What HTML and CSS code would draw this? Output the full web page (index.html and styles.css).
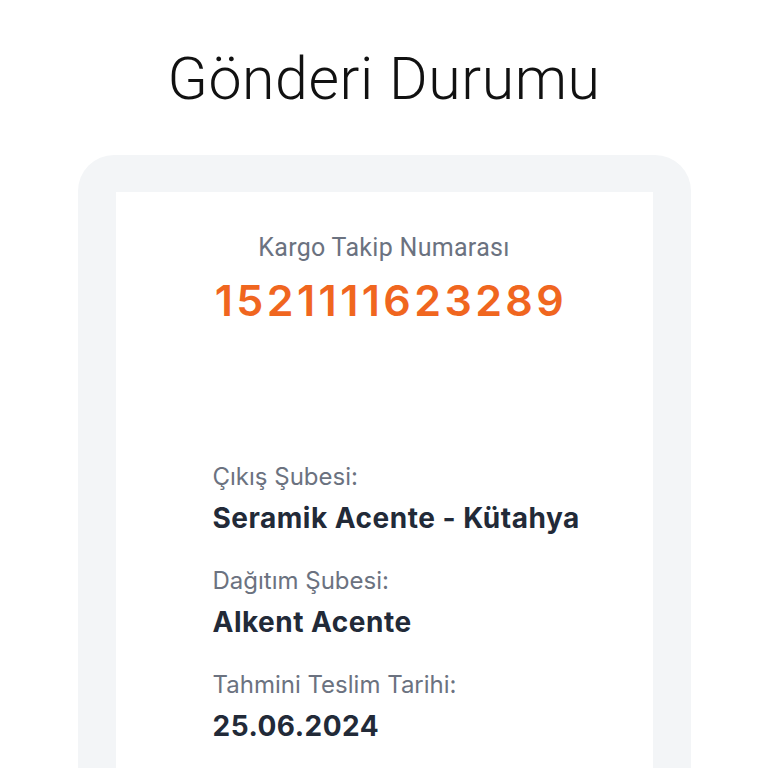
FILE: index.html
```html
<!DOCTYPE html>
<html lang="tr">
<head>
<meta charset="utf-8">
<title>Gönderi Durumu</title>
<link rel="stylesheet" href="styles.css">
</head>
<body>
<main class="page">
  <h1 class="title">Gönderi Durumu</h1>
  <section class="card">
    <div class="panel">
      <div class="tracking">
        <div class="tracking-label">Kargo Takip Numarası</div>
        <div class="tracking-number">1521111623289</div>
      </div>
      <dl class="details">
        <div class="item">
          <dt class="label">Çıkış Şubesi:</dt>
          <dd class="value">Seramik Acente - Kütahya</dd>
        </div>
        <div class="item">
          <dt class="label">Dağıtım Şubesi:</dt>
          <dd class="value">Alkent Acente</dd>
        </div>
        <div class="item">
          <dt class="label">Tahmini Teslim Tarihi:</dt>
          <dd class="value">25.06.2024</dd>
        </div>
      </dl>
    </div>
  </section>
</main>
</body>
</html>
```
FILE: styles.css
```css
html, body {
  margin: 0;
  padding: 0;
  background: #ffffff;
}
body {
  font-family: Inter, "Noto Sans", sans-serif;
  height: 768px;
  overflow: hidden;
}
.page {
  display: flex;
  flex-direction: column;
  align-items: center;
  height: 768px;
  overflow: hidden;
}
.title {
  margin: 44px 0 41px;
  font-family: Roboto, "Noto Sans", sans-serif;
  font-weight: 300;
  font-size: 59px;
  line-height: 70px;
  color: #111111;
  letter-spacing: 0.6px;
}
.card {
  width: 613px;
  box-sizing: border-box;
  background: #f3f5f7;
  border-radius: 36px 36px 0 0;
  padding: 37px 38px 0;
  flex: 1 0 auto;
}
.panel {
  background: #ffffff;
  padding: 41px 0 0 97px;
  height: 100%;
  box-sizing: border-box;
}
.tracking {
  display: flex;
  flex-direction: column;
  align-items: center;
  padding-right: 97px;
  gap: 12px;
}
.tracking-label {
  font-family: Roboto, "Noto Sans", sans-serif;
  font-size: 25px;
  line-height: 30px;
  letter-spacing: 0.3px;
  color: #6b7280;
}
.tracking-number {
  font-size: 43px;
  line-height: 50px;
  font-weight: 600;
  color: #f0661f;
  letter-spacing: 3.4px;
  margin-left: 14px;
}
.details {
  margin: 137px 0 0;
  display: flex;
  flex-direction: column;
  gap: 30px;
}
.item {
  display: flex;
  flex-direction: column;
  gap: 8px;
}
.label {
  font-size: 24px;
  line-height: 30px;
  color: #6b7280;
}
.value {
  margin: 0;
  font-size: 28px;
  line-height: 36px;
  font-weight: 700;
  letter-spacing: 0.5px;
  color: #222a38;
}
```
